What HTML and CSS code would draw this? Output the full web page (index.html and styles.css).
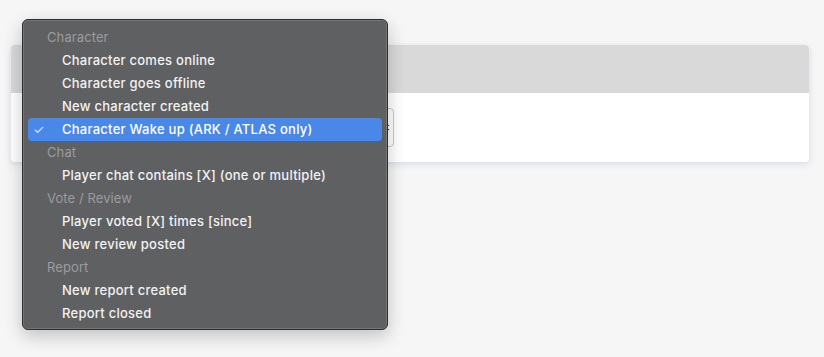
FILE: index.html
```html
<!DOCTYPE html>
<html>
	<head>
		<meta charset="utf-8" />
		<title>Trigger</title>
		<link rel="stylesheet" href="styles.css">
	</head>
	<body>
		<div class="card">
			<div class="card-head"></div>
			<div class="card-body">
				<div class="select-box">
					<span class="arrow">
						<svg width="6" height="9" viewBox="0 0 6 9"><path d="M0.5 3 L3 0.5 L5.5 3 Z M0.5 6 L3 8.5 L5.5 6 Z" fill="#333"/></svg>
					</span>
				</div>
			</div>
		</div>

		<ul class="menu">
			<li class="group">Character</li>
			<li class="item">Character comes online</li>
			<li class="item">Character goes offline</li>
			<li class="item">New character created</li>
			<li class="item selected"><span class="check">✓</span>Character Wake up (ARK / ATLAS only)</li>
			<li class="group">Chat</li>
			<li class="item">Player chat contains [X] (one or multiple)</li>
			<li class="group">Vote / Review</li>
			<li class="item">Player voted [X] times [since]</li>
			<li class="item">New review posted</li>
			<li class="group">Report</li>
			<li class="item">New report created</li>
			<li class="item">Report closed</li>
		</ul>
	</body>
</html>
```

FILE: styles.css
```css
* {
	padding: 0;
	margin: 0;
	box-sizing: border-box;
}

body {
	background: #f6f6f6;
	font-family: Inter, "Noto Sans", sans-serif;
	font-size: 13px;
	padding: 45px 15px 0 11px;
	position: relative;
	height: 357px;
}

.card {
	width: 798px;
	background: #fff;
	border-radius: 4px;
	overflow: hidden;
	box-shadow: 0 2px 6px rgba(120, 140, 190, 0.25);
}

.card-head {
	height: 48px;
	background: #d9d9d9;
}

.card-body {
	padding: 15px 0 15px 16px;
}

.select-box {
	width: 367px;
	height: 39px;
	border: 1px solid #c8c8c8;
	border-radius: 4px;
	display: flex;
	justify-content: flex-end;
	align-items: center;
	padding-right: 3px;
}

.arrow {
	display: flex;
}

.menu {
	list-style: none;
	position: absolute;
	left: 22px;
	top: 19px;
	width: 366px;
	padding: 6px 5px 4px 5px;
	background: #5f6062;
	border: 1px solid #2e2e2e;
	border-radius: 6px;
	box-shadow: inset 0 0 0 1px #747577, 0 6px 18px rgba(0, 0, 0, 0.22);
}

.menu li {
	height: 23px;
	line-height: 23px;
	white-space: nowrap;
}

.group {
	color: #9b9c9e;
	padding-left: 19px;
	letter-spacing: 0.1px;
}

.item {
	color: #f2f2f2;
	font-weight: 500;
	letter-spacing: 0.25px;
	padding-left: 34px;
	position: relative;
	border-radius: 4px;
}

.selected {
	background: #4a88e8;
	color: #fff;
}

.check {
	position: absolute;
	left: 5px;
	font-size: 13px;
	font-weight: 300;
}
```
